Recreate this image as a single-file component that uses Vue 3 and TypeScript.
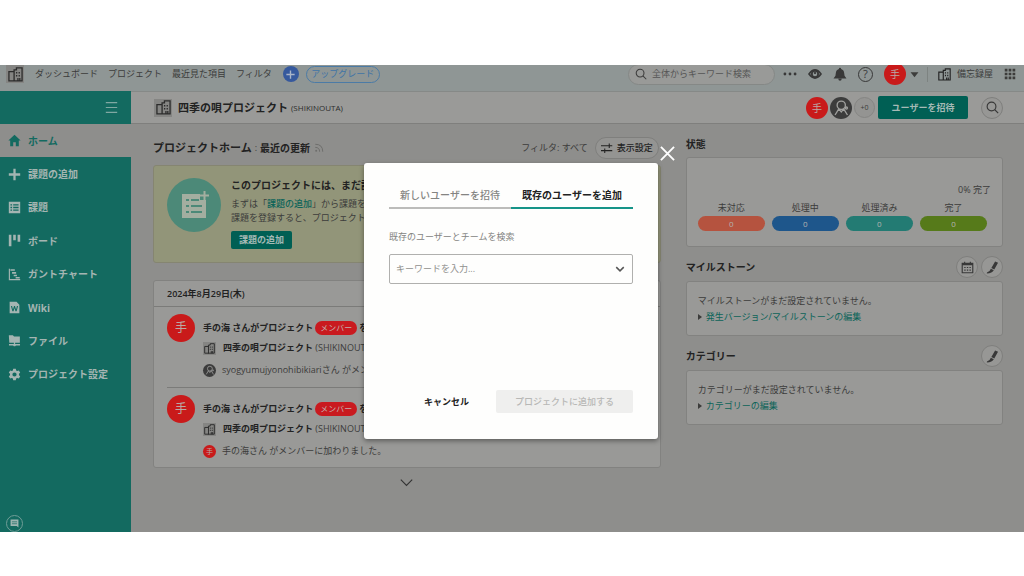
<script setup lang="ts">
import { ref } from 'vue'

interface NavItem { label: string; icon: string; active?: boolean }
interface FeedEntry { id: number; member: string; avatar: 'user' | 'red'; tail: string }
interface Status { label: string; count: number; tone: string }

const topLinks: string[] = ['ダッシュボード', 'プロジェクト', '最近見た項目', 'フィルタ']

const navItems: NavItem[] = [
  { label: 'ホーム', icon: 'M8 1 0.5 8H2.7V15H6.4V10.2H9.6V15H13.3V8H15.5Z', active: true },
  { label: '課題の追加', icon: 'M6.6 1H9.4V6.6H15V9.4H9.4V15H6.6V9.4H1V6.6H6.6Z' },
  { label: '課題', icon: 'M1 1H15V15H1ZM3 4V5.6H5V4ZM6.4 4V5.6H13V4ZM3 7.2V8.8H5V7.2ZM6.4 7.2V8.8H13V7.2ZM3 10.4V12H5V10.4ZM6.4 10.4V12H13V10.4Z' },
  { label: 'ボード', icon: 'M1 1H4.2V15H1ZM6.4 1H9.6V7.6H6.4ZM11.8 1H15V9.6H11.8Z' },
  { label: 'ガントチャート', icon: 'M1 1H2.4V13.6H15V15H1ZM3 1.4H8.4V3.4H3ZM5 5H10V7H5ZM7 8.4H11V10.2H7ZM9.4 11H14.4V12.8H9.4Z' },
  { label: 'Wiki', icon: 'M2 1H10.5L14 4.5V15H2ZM3.6 6.2 5.4 12.6H6.8L8 8.6 9.2 12.6H10.6L12.4 6.2H11L9.9 10.4 8.6 6.2H7.4L6.1 10.4 5 6.2Z' },
  { label: 'ファイル', icon: 'M1 1.5H6L7.4 3H14.6V10.8H8.8V12.2H14.8V14H9.8L8.8 15H7.2L6.2 14H1.2V12.2H7.2V10.8H1.6Z' },
  { label: 'プロジェクト設定', icon: 'M6.4 1H9.6L10 3 11.4 3.8 13.4 3.1 15 5.9 13.5 7.2V8.8L15 10.1 13.4 12.9 11.4 12.2 10 13 9.6 15H6.4L6 13 4.6 12.2 2.6 12.9 1 10.1 2.5 8.8V7.2L1 5.9 2.6 3.1 4.6 3.8 6 3ZM8 5.4A2.6 2.6 0 1 0 8 10.6 2.6 2.6 0 1 0 8 5.4Z' },
]

const entries: FeedEntry[] = [
  { id: 1, member: 'syogyumujyonohibikiari', avatar: 'user', tail: 'さん がメンバー' },
  { id: 2, member: '手の海', avatar: 'red', tail: 'さん がメンバーに加わりました。' },
]

const statuses: Status[] = [
  { label: '未対応', count: 0, tone: 'open' },
  { label: '処理中', count: 0, tone: 'doing' },
  { label: '処理済み', count: 0, tone: 'resolved' },
  { label: '完了', count: 0, tone: 'closed' },
]

const BUILDING = 'M6.5 14.8H1V5H6.5M6.5 15.5V3H9V1H15V14.8H6.5M9.2 5.2V6.8M12 5.2V6.8M9.2 8.4V10M12 8.4V10M10.6 15V11.8M12.6 15V11.8'
const BRUSH = 'M11.2 0.6 14.8 2 10.2 10.4 6.6 8.6ZM6 9.4 9.6 11.4Q7.8 15 1 15.4L1.2 14.2Q4.6 13.4 6 9.4Z'
const PERSON = 'M8 2A4 4 0 1 1 8 10 4 4 0 1 1 8 2ZM2 15.5 5.6 9.6 8 12.5 10.4 9.6 14 15.5M13 7.8A1 1 0 1 1 13 9.8 1 1 0 1 1 13 7.8'
</script>

<template>
  <div class="page">
    <div class="screen">
      <header class="topbar">
        <div class="topbar-row">
          <span class="tile tile-lg"><svg viewBox="0 0 16 16" class="line"><path :d="BUILDING" /></svg></span>
          <nav class="top-links">
            <a v-for="l in topLinks" :key="l" href="#">{{ l }}</a>
          </nav>
          <button class="add" type="button" aria-label="追加"><svg viewBox="0 0 16 16"><path d="M8 2V14M2 8H14" /></svg></button>
          <button class="upgrade" type="button">アップグレード</button>
          <span class="spacer"></span>
          <label class="search">
            <svg viewBox="0 0 16 16" class="line"><circle cx="6.8" cy="6.8" r="5.2" /><path d="M10.6 10.6 15 15" /></svg>
            <input type="search" placeholder="全体からキーワード検索" aria-label="全体からキーワード検索" />
          </label>
          <div class="tools">
            <button type="button" aria-label="その他"><svg viewBox="0 0 16 16" class="fill"><circle cx="2.2" cy="8" r="1.6" /><circle cx="8" cy="8" r="1.6" /><circle cx="13.8" cy="8" r="1.6" /></svg></button>
            <button type="button" aria-label="ウォッチ"><svg viewBox="0 0 16 16" class="line bold"><path d="M1.2 8Q8-1.2 14.8 8 8 17.2 1.2 8Z" /><circle cx="8" cy="8" r="3.6" /><path d="M8 5.6V8" /></svg></button>
            <button type="button" aria-label="お知らせ"><svg viewBox="0 0 16 16" class="fill"><path d="M8 .8Q9.2.8 9.3 2.2 12.6 3.4 12.8 7L13.2 10 15.4 13H.6L2.8 10 3.2 7Q3.400 3.400 6.700 2.200 6.800.8 8 .8ZM6 13.400H10Q9.800 15.600 8 15.600 6.200 15.600 6 13.400Z" /></svg></button>
            <button type="button" aria-label="ヘルプ" class="help"><span>?</span></button>
          </div>
          <button class="me" type="button"><span class="avatar md">手</span><svg viewBox="0 0 16 16" class="fill"><path d="M1 4H15L8 13Z" /></svg></button>
          <a class="org" href="#"><svg viewBox="0 0 16 16" class="line"><path :d="BUILDING" /></svg>備忘録屋</a>
          <button class="apps" type="button" aria-label="アプリ">
            <svg viewBox="0 0 16 16" class="fill"><path d="M1 1h3.6v3.6H1zM6.2 1h3.6v3.6H6.2zM11.4 1H15v3.6h-3.6zM1 6.2h3.6v3.6H1zM6.2 6.2h3.6v3.6H6.2zM11.4 6.2H15v3.6h-3.6zM1 11.4h3.6V15H1zM6.2 11.4h3.6V15H6.2zM11.4 11.4H15V15h-3.6z" /></svg>
          </button>
        </div>
      </header>

      <div class="body">
        <aside class="sidebar">
          <div class="side-head"><button type="button" aria-label="メニュー"><svg viewBox="0 0 16 16"><path d="M1 2H15M1 8H15M1 14H15" /></svg></button></div>
          <nav class="side-nav">
            <a v-for="n in navItems" :key="n.label" href="#" :class="{ active: n.active }">
              <svg viewBox="0 0 16 16"><path fill-rule="evenodd" :d="n.icon" /></svg>{{ n.label }}
            </a>
          </nav>
          <button class="chat" type="button" aria-label="フィードバック"><svg viewBox="0 0 16 16"><path d="M1 1H15V15L12 12.4H1Z" /><path class="cut" d="M3.5 5H12.5M3.5 8.4H12.5" /></svg></button>
        </aside>

        <div class="work">
          <div class="project-bar">
            <span class="tile tile-lg"><svg viewBox="0 0 16 16" class="line"><path :d="BUILDING" /></svg></span>
            <h1>四季の唄プロジェクト</h1><span class="key">(SHIKINOUTA)</span>
            <span class="spacer"></span>
            <div class="members">
              <span class="avatar md">手</span>
              <span class="avatar md user"><svg viewBox="0 0 16 16"><path :d="PERSON" /></svg></span>
              <span class="avatar md more">+0</span>
            </div>
            <button class="invite" type="button">ユーザーを招待</button>
            <button class="round find" type="button" aria-label="検索"><svg viewBox="0 0 16 16" class="line"><circle cx="6.8" cy="6.8" r="5.4" /><path d="M10.8 10.8 15 15" /></svg></button>
          </div>

          <main class="columns">
            <section class="left">
              <div class="title-row">
                <h2>プロジェクトホーム</h2><span class="colon">:</span><h3>最近の更新</h3>
                <svg viewBox="0 0 16 16" class="rss"><circle cx="3.5" cy="12.5" r="1.6" /><path d="M2 7Q9 7 9 14M2 2Q14 2 14 14" /></svg>
                <span class="spacer"></span>
                <span class="filter">フィルタ: すべて</span>
                <button class="display" type="button"><svg viewBox="0 0 16 16" class="line"><path d="M0 5H15M0 11.5H15M11 2V8M5 8.5V14.5" /></svg>表示設定</button>
              </div>

              <div class="banner">
                <span class="banner-icon">
                  <svg viewBox="0 0 54 54"><path fill-rule="evenodd" d="M15 16H33V22H39V40H15ZM19 21V23H22V21ZM24 21V23H32V21ZM19 27V29H22V27ZM24 27V29H35V27ZM19 33V35H22V33ZM24 33V35H35V33Z" /><path class="plus" d="M37.5 13V22M33 17.5H42" /></svg>
                </span>
                <div class="banner-text">
                  <h3>このプロジェクトには、まだ課題</h3>
                  <p>まずは「<a href="#">課題の追加</a>」から課題を登録</p>
                  <p>課題を登録すると、プロジェクトメ</p>
                  <button type="button">課題の追加</button>
                </div>
              </div>

              <div class="card feed">
                <h3 class="date">2024年8月29日(木)</h3>
                <article v-for="e in entries" :key="e.id" class="entry">
                  <span class="avatar lg">手</span>
                  <div class="entry-body">
                    <div class="what"><b>手の海 さんがプロジェクト</b><span class="badge">メンバー</span><b>を</b></div>
                    <div class="proj"><span class="tile"><svg viewBox="0 0 16 16" class="line"><path :d="BUILDING" /></svg></span><span><b>四季の唄プロジェクト</b> (SHIKINOUTA)</span></div>
                    <div class="who">
                      <span v-if="e.avatar === 'user'" class="avatar sm user"><svg viewBox="0 0 16 16"><path :d="PERSON" /></svg></span>
                      <span v-else class="avatar sm">手</span>
                      <span>{{ e.member }}{{ e.tail }}</span>
                    </div>
                  </div>
                </article>
              </div>
              <button class="more-btn" type="button" aria-label="もっと見る"><svg viewBox="0 0 16 16" class="line"><path d="M1 4.5 8 11.5 15 4.5" /></svg></button>
            </section>

            <section class="right">
              <div class="head"><h3>状態</h3></div>
              <div class="card status">
                <p class="percent">0% 完了</p>
                <dl>
                  <div v-for="s in statuses" :key="s.label"><dt>{{ s.label }}</dt><dd :class="s.tone">{{ s.count }}</dd></div>
                </dl>
              </div>

              <div class="head actions">
                <h3>マイルストーン</h3>
                <button class="round" type="button" aria-label="カレンダー"><svg viewBox="0 0 16 16" class="line"><path d="M1.5 3H14.5V14.5H1.5ZM1.5 4.5H14.5M4.5 1V4M11.5 1V4" /><path d="M4 8H12.5M4 11.3H12.5" stroke-dasharray="1.7 1.5" /></svg></button>
                <button class="round" type="button" aria-label="マイルストーンの編集"><svg viewBox="0 0 16 16" class="fill"><path :d="BRUSH" /></svg></button>
              </div>
              <div class="card note"><p>マイルストーンがまだ設定されていません。</p><a href="#">発生バージョン/マイルストーンの編集</a></div>

              <div class="head actions">
                <h3>カテゴリー</h3>
                <button class="round" type="button" aria-label="カテゴリーの編集"><svg viewBox="0 0 16 16" class="fill"><path :d="BRUSH" /></svg></button>
              </div>
              <div class="card note"><p>カテゴリーがまだ設定されていません。</p><a href="#">カテゴリーの編集</a></div>
            </section>
          </main>
        </div>
      </div>

      <div class="overlay">
        <div class="dialog" role="dialog" aria-modal="true" aria-label="既存のユーザーを追加">
          <button class="close" type="button" aria-label="閉じる"><svg viewBox="0 0 16 16"><path d="M1 1 15 15M15 1 1 15" /></svg></button>
          <div class="tabs" role="tablist">
            <button type="button" role="tab" :aria-selected="tab === 'new'" @click="tab = 'new'">新しいユーザーを招待</button>
            <button type="button" role="tab" :aria-selected="tab === 'existing'" @click="tab = 'existing'">既存のユーザーを追加</button>
          </div>
          <label class="field-label" for="keyword">既存のユーザーとチームを検索</label>
          <div class="combo">
            <input id="keyword" v-model="keyword" type="text" role="combobox" aria-expanded="false" placeholder="キーワードを入力..." />
            <svg viewBox="0 0 16 16"><path d="M2 5 8 11 14 5" /></svg>
          </div>
          <div class="dialog-actions">
            <button class="cancel" type="button">キャンセル</button>
            <button class="submit" type="button" disabled>プロジェクトに追加する</button>
          </div>
        </div>
      </div>
    </div>
  </div>
</template>

<script lang="ts">
const tab = ref<'new' | 'existing'>('existing')
const keyword = ref('')
</script>

<style>
body { background: #fff; }
</style>

<style scoped>
* { box-sizing: border-box; margin: 0; padding: 0; }
.page {
  min-height: 100vh; padding: 65px 0 44px; display: flex; background: #fff;
  font: 9px/14px "Open Sans", "Noto Sans CJK JP", sans-serif; color: #3c3c3b; white-space: nowrap;
}
button, input { font: inherit; color: inherit; border: 0; background: none; outline: 0; }
button { display: inline-flex; align-items: center; justify-content: center; }
a { color: inherit; text-decoration: none; }
svg { display: block; flex: none; }
.line { fill: none; stroke: currentColor; stroke-width: 1.4; }
.line.bold { stroke-width: 2; }
.fill { fill: currentColor; }
.spacer { flex: 1; }
h1, h2, h3 { font-weight: 700; color: #222; }

.screen { position: relative; flex: 1; min-width: 0; display: flex; flex-direction: column; background: #8e8e8c; overflow: hidden; }
.topbar { height: 26px; overflow: hidden; background: #8f9695; }
.topbar-row { height: 34px; margin-top: -8px; display: flex; align-items: center; padding: 0 8px 0 6px; }
.top-links { display: flex; gap: 10px; margin: 0 11px; }
.tile { display: grid; place-items: center; width: 13px; height: 13px; background: #858583; color: #2c2c2c; }
.tile svg { width: 11px; height: 11px; }
.tile-lg { width: 18px; height: 18px; }
.tile-lg svg { width: 15px; height: 15px; }
.add { width: 16px; height: 16px; border-radius: 50%; background: #36599d; }
.add svg { width: 11px; height: 11px; stroke: #a9b4c8; stroke-width: 2; }
.upgrade { margin-left: 7px; width: 74px; height: 17px; border: 1px solid #4b7ba6; border-radius: 9px; color: #3f74a5; }
.search { display: flex; align-items: center; gap: 5px; width: 147px; height: 21px; padding: 0 6px; border: 1px solid #858886; border-radius: 11px; background: #999a98; color: #3c3c3b; }
.search svg { width: 12px; height: 12px; }
.search input { flex: 1; min-width: 0; }
.search input::placeholder { color: #555; opacity: 1; }
.tools { display: flex; align-items: center; gap: 11px; margin: 0 11px 0 8px; color: #383838; }
.tools svg { width: 14px; height: 14px; }
.help { width: 15px; height: 15px; border: 1px solid #383838; border-radius: 50%; font-size: 11px; }
.me { gap: 4px; }
.me svg { width: 9px; height: 9px; }
.org { display: flex; align-items: center; gap: 6px; height: 15px; margin: 0 11px 0 8px; padding-left: 10px; border-left: 1px solid #7d8381; }
.org svg { width: 13px; height: 13px; color: #222; }
.apps svg { width: 12px; height: 12px; }

.avatar { flex: none; display: grid; place-items: center; border-radius: 50%; background: #c91a1a; color: #b9a9a6; }
.avatar.sm { width: 13px; height: 13px; font-size: 7px; }
.avatar.md { width: 22px; height: 22px; font-size: 10px; }
.avatar.lg { width: 28px; height: 28px; font-size: 12px; }
.avatar svg { width: 75%; height: 75%; fill: none; stroke: #a0a09e; stroke-width: 1.3; }
.avatar.user { background: #3c3c3c; }
.avatar.more { width: 21px; height: 21px; background: #949492; border: 1px solid #858583; color: #3c3c3b; font-size: 7px; }

.body { flex: 1; display: flex; }
.sidebar { width: 131px; display: flex; flex-direction: column; background: #136a60; color: #a4b5b2; }
.side-head { height: 33px; display: flex; align-items: center; justify-content: flex-end; padding-right: 12px; }
.side-head svg { width: 15px; height: 13px; stroke: #80a8a2; stroke-width: 1.4; }
.side-nav { height: 267px; display: flex; flex-direction: column; font-size: 10px; font-weight: 700; }
.side-nav a { flex: 1; display: flex; align-items: center; gap: 7px; padding-left: 8px; }
.side-nav svg { width: 13px; height: 13px; fill: currentColor; }
.side-nav .active { background: #8e8e8c; color: #136a60; }
.chat { width: 17px; height: 17px; margin: auto 0 0 6px; border: 1px solid #6f9d97; border-radius: 50%; }
.chat svg { width: 9px; height: 9px; fill: #9db5b1; }
.cut { stroke: #136a60; stroke-width: 1.2; }

.work { flex: 1; min-width: 0; }
.project-bar { height: 33px; display: flex; align-items: center; padding: 0 21px 0 23px; background: #9a9a98; border-top: 1px solid #868987; border-bottom: 1px solid #7f7f7d; }
.project-bar h1 { font-size: 11px; margin: 0 3px 0 6px; }
.key { color: #2c2c2c; font-size: 8px; }
.members { display: flex; align-items: center; gap: 2px; margin-right: 3px; }
.invite { width: 90px; height: 23px; margin-right: 6px; border-radius: 2px; background: #005f54; color: #a5bab6; font-weight: 700; }
.round { width: 22px; height: 22px; border: 1px solid #7f7f7d; border-radius: 50%; background: #979795; color: #383838; }
.round svg { width: 13px; height: 13px; }
.find { margin-left: 7px; }

.columns { display: grid; grid-template-columns: 8fr 5fr; column-gap: 25px; padding: 12px 21px 0 22px; }
.left, .right { min-width: 0; }
.title-row { height: 23px; display: flex; align-items: center; margin-bottom: 6px; }
.title-row h2 { font-size: 11px; }
.title-row h3 { font-size: 10px; }
.colon { margin: 0 3px; }
.rss { width: 10px; height: 10px; margin-left: 4px; fill: #6e6e6c; }
.rss path { fill: none; stroke: #6e6e6c; stroke-width: 1.6; }
.display { width: 64px; height: 22px; gap: 4px; margin: 0 2px 0 7px; border: 1px solid #7f7f7d; border-radius: 11px; background: #949492; color: #222; font-weight: 500; }
.display svg { width: 12px; height: 12px; }

.card { background: #999997; border: 1px solid #828280; border-radius: 3px; }
.banner { height: 98px; display: flex; gap: 10px; padding: 12px 13px; overflow: hidden; border: 1px solid #858571; border-radius: 3px; background: #929579; }
.banner-icon { width: 54px; height: 54px; border-radius: 50%; background: #4c8978; }
.banner-icon svg { width: 54px; height: 54px; fill: #a3aea0; }
.banner-icon .plus { fill: none; stroke: #a3aea0; stroke-width: 2; }
.banner-text h3 { font-size: 10px; margin-bottom: 5px; }
.banner-text a { color: #0c6459; font-weight: 500; }
.banner-text button { width: 61px; height: 18px; margin-top: 6px; border-radius: 2px; background: #005f54; color: #a5bab6; font-weight: 700; }

.feed { margin-top: 17px; overflow: hidden; }
.date { height: 26px; padding-left: 13px; font-size: 9px; line-height: 26px; font-weight: 600; border-bottom: 1px solid #7b7b79; }
.entry { height: 80px; display: flex; gap: 8px; margin: 0 15px 0 13px; padding-top: 7px; }
.entry + .entry { border-top: 1px solid #7b7b79; }
.entry b { color: #222; }
.entry-body > div { display: flex; align-items: center; }
.what { height: 27px; gap: 2px; }
.proj { height: 14px; gap: 7px; }
.who { height: 30px; gap: 6px; }
.badge { padding: 0 5px; border-radius: 7px; background: #c91a1f; color: #c5b0ae; font-size: 8px; }
.more-btn { width: 100%; height: 28px; color: #333; }
.more-btn svg { width: 13px; height: 13px; }

.head { height: 16px; display: flex; align-items: center; gap: 3px; margin-bottom: 5px; }
.head h3 { flex: 1; font-size: 10px; }
.head.actions { height: 22px; margin: 9px 0 3px; }
.status { height: 90px; padding: 25px 15px 0 11px; }
.percent { text-align: right; margin-right: -4px; }
.status dl { display: flex; gap: 7px; margin-top: 4px; }
.status dl div { flex: 1; text-align: center; }
.status dd { height: 15px; margin-top: 1px; border-radius: 8px; color: #b3b3b0; line-height: 15px; font-size: 8px; }
.open { background: #b5533f; }
.doing { background: #1e568b; }
.resolved { background: #237b73; }
.closed { background: #567a1a; }
.note { height: 55px; padding: 11px; line-height: 16px; }
.note a { display: flex; align-items: center; gap: 4px; color: #0c6459; }
.note a::before { content: ""; border-left: 4px solid #3c3c3b; border-top: 3px solid transparent; border-bottom: 3px solid transparent; }

.overlay { position: absolute; inset: 5px 2px 0 0; display: grid; place-items: center; }
.dialog { position: relative; width: 294px; height: 276px; display: flex; flex-direction: column; padding: 19px 25px 26px; border-radius: 3px; background: #fefefd; box-shadow: 0 2px 5px #0006; }
.close { position: absolute; top: -17px; right: -17px; }
.close svg { width: 15px; height: 15px; stroke: #fff; stroke-width: 2; }
.tabs { display: flex; }
.tabs button { flex: 1; height: 27px; border-bottom: 2px solid #bcbcba; font-size: 10px; font-weight: 500; color: #848482; }
.tabs button[aria-selected="true"] { border-color: #169488; color: #222; font-weight: 700; }
.field-label { margin: 21px 0 10px; color: #848482; }
.combo { height: 30px; display: flex; align-items: center; padding: 0 7px 0 6px; border: 1px solid #b0b0ae; border-radius: 2px; }
.combo input { flex: 1; min-width: 0; font-size: 9px; color: #333; }
.combo input::placeholder { color: #90908e; opacity: 1; }
.combo svg { width: 10px; height: 10px; fill: none; stroke: #555; stroke-width: 2.4; }
.dialog-actions { display: flex; justify-content: flex-end; gap: 14px; margin-top: auto; }
.cancel { width: 71px; font-weight: 700; color: #222; }
.submit { width: 137px; height: 23px; border-radius: 2px; background: #efefee; color: #b8b8b6; font-weight: 500; }
</style>
